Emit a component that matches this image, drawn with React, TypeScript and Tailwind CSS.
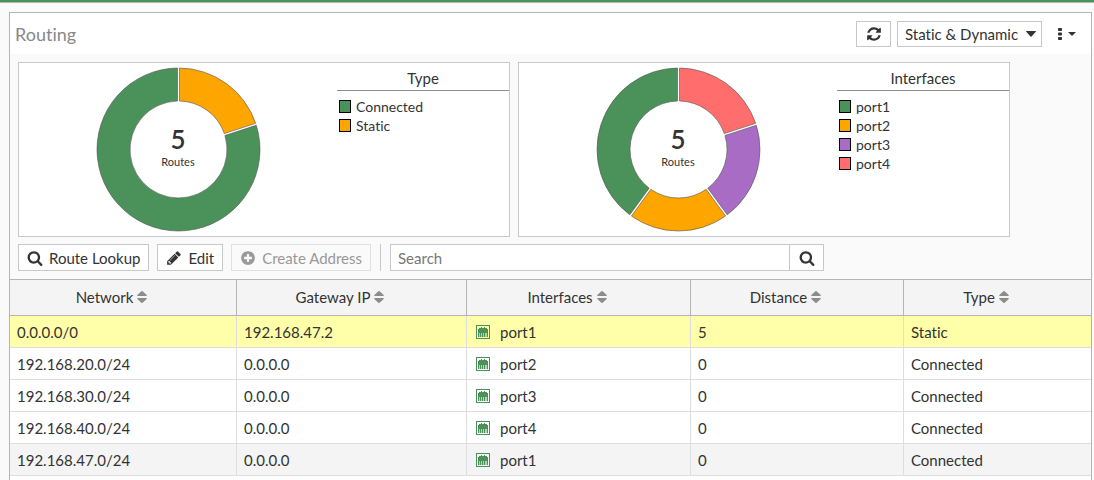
import type { ReactNode } from "react";

const GREEN = "#4a9259";
const ORANGE = "#ffa500";
const PURPLE = "#a86cc5";
const RED = "#ff6d6d";

const PATHS = {
  search:
    "M1216 832q0-185-131.5-316.5t-316.5-131.5-316.5 131.5-131.5 316.5 131.5 316.5 316.5 131.5 316.5-131.5 131.5-316.5zm512 832q0 52-38 90t-90 38q-54 0-90-38l-343-342q-179 124-399 124-143 0-273.5-55.5t-225-150-150-225-55.5-273.5 55.5-273.5 150-225 225-150 273.5-55.5 273.5 55.5 225 150 150 225 55.5 273.5q0 220-124 399l343 343q37 37 37 90z",
  refresh:
    "M1639 1056q0 5-1 7-64 268-268 434.5t-478 166.5q-146 0-282.5-55t-243.5-157l-129 129q-19 19-45 19t-45-19-19-45v-448q0-26 19-45t45-19h448q26 0 45 19t19 45-19 45l-137 137q71 66 161 102t187 36q134 0 250-65t186-179q11-17 53-117 8-23 30-23h192q13 0 22.5 9.5t9.5 22.5zm25-800v448q0 26-19 45t-45 19h-448q-26 0-45-19t-19-45 19-45l138-138q-148-137-349-137-134 0-250 65t-186 179q-11 17-53 117-8 23-30 23h-199q-13 0-22.5-9.5t-9.5-22.5v-7q65-268 270-434.5t480-166.5q146 0 284 55.5t245 156.5l130-129q19-19 45-19t45 19 19 45z",
  pencil:
    "M491 1536l91-91-235-235-91 91v107h128v128h107zm523-928q0-22-22-22-10 0-17 7l-542 542q-7 7-7 17 0 22 22 22 10 0 17-7l542-542q7-7 7-17zm-54-192l416 416-832 832h-416v-416zm683 96q0 53-37 90l-166 166-416-416 166-165q36-38 90-38 53 0 91 38l235 234q37 39 37 91z",
  plus:
    "M1344 960v-128q0-26-19-45t-45-19h-256v-256q0-26-19-45t-45-19h-128q-26 0-45 19t-19 45v256h-256q-26 0-45 19t-19 45v128q0 26 19 45t45 19h256v256q0 26 19 45t45 19h128q26 0 45-19t19-45v-256h256q26 0 45-19t19-45zm320-64q0 209-103 385.5t-279.5 279.5-385.5 103-385.5-103-279.5-279.5-103-385.5 103-385.5 279.5-279.5 385.5-103 385.5 103 279.5 279.5 103 385.5z",
};

function Icon({ name }: { name: keyof typeof PATHS }) {
  return (
    <svg viewBox="0 0 1792 1792" className="size-4 shrink-0 fill-current" aria-hidden="true">
      <path d={PATHS[name]} />
    </svg>
  );
}

function SortIcon() {
  return (
    <svg viewBox="0 0 10 14" className="h-[14px] w-[10px] shrink-0 fill-[#8c8c8c]" aria-hidden="true">
      <path d="M4.4 1.2q.6-.6 1.2 0L9.7 5q.5.9-.5 1H.8q-1-.1-.5-1zM4.4 12.8q.6.6 1.2 0L9.7 9q.5-.9-.5-1H.8q-1 .1-.5 1z" />
    </svg>
  );
}

function PortIcon() {
  return (
    <svg viewBox="0 0 14 14" className="size-[14px] shrink-0" aria-hidden="true">
      <rect x=".5" y=".5" width="13" height="13" fill="none" stroke={GREEN} />
      <path fill={GREEN} d="M2 4h1V3h2V2h1v1h2V2h1v1h2v1h1v4H2z" />
      <path fill={GREEN} d="M2 8h1v4H2zM4 8h1v4H4zM6 8h1v4H6zM8 8h1v4H8zM11 8h1v4h-1z" />
      <path fill={GREEN} opacity=".4" d="M3 8h1v4H3zM5 8h1v4H5zM7 8h1v4H7zM9 8h2v4H9z" />
    </svg>
  );
}

type Slice = { label: string; color: string; value: number };

function slicePath(from: number, to: number) {
  const outer = 81.5;
  const inner = 48.5;
  const gap = 1;
  const point = (radius: number, angle: number, side: number) => {
    const a = angle + side * Math.asin(gap / radius);
    return `${(82.5 + radius * Math.sin(a)).toFixed(2)} ${(82.5 - radius * Math.cos(a)).toFixed(2)}`;
  };
  const large = to - from > Math.PI ? 1 : 0;
  return `M${point(outer, from, 1)}A${outer} ${outer} 0 ${large} 1 ${point(outer, to, -1)}L${point(inner, to, -1)}A${inner} ${inner} 0 ${large} 0 ${point(inner, from, 1)}Z`;
}

function ChartCard({ title, slices }: { title: string; slices: Slice[] }) {
  const total = slices.reduce((sum, s) => sum + s.value, 0);
  let angle = 0;
  const arcs = [...slices].reverse().map((s) => {
    const from = angle;
    angle += (s.value / total) * 2 * Math.PI;
    return { ...s, d: slicePath(from, angle) };
  });
  return (
    <section className="flex h-[175px] w-[492px] border border-[#c8c8c8] bg-white">
      <div className="grid flex-1 place-items-center pb-px">
        <svg viewBox="0 0 164 164" className="col-start-1 row-start-1 size-[164px] overflow-visible" aria-hidden="true">
          {arcs.map((a) => (
            <path key={a.label} d={a.d} fill={a.color} stroke="#555" strokeOpacity=".6" strokeWidth="1" />
          ))}
        </svg>
        <div className="col-start-1 row-start-1 flex flex-col items-center pb-1.5">
          <span className="text-[26px] leading-[31px] font-semibold">{total}</span>
          <span className="text-[11px] leading-[13px]">Routes</span>
        </div>
      </div>
      <div className="w-[172px]">
        <h2 className="h-7 border-b border-[#8c8c8c] text-center text-[15px] leading-[30px]">{title}</h2>
        <ul className="flex flex-col pt-1.5 pl-0.5">
          {slices.map((s) => (
            <li key={s.label} className="flex h-[19px] items-center gap-[5px] text-sm">
              <span className="h-[13px] w-3 border border-black" style={{ backgroundColor: s.color }} />
              {s.label}
            </li>
          ))}
        </ul>
      </div>
    </section>
  );
}

function ToolButton({ icon, children, disabled }: { icon: keyof typeof PATHS; children: ReactNode; disabled?: boolean }) {
  return (
    <button
      type="button"
      disabled={disabled}
      className="flex h-[27px] items-center gap-1.5 border border-[#c8c8c8] bg-white px-2 whitespace-nowrap disabled:border-[#e0e0e0] disabled:bg-transparent disabled:text-[#999]"
    >
      <Icon name={icon} />
      {children}
    </button>
  );
}

const COLUMNS = [
  { name: "Network", width: "w-[227px]" },
  { name: "Gateway IP", width: "w-[230px]" },
  { name: "Interfaces", width: "w-[224px]" },
  { name: "Distance", width: "w-[213px]" },
  { name: "Type", width: "" },
];

const ROUTES = [
  { network: "0.0.0.0/0", gateway: "192.168.47.2", port: "port1", distance: 5, type: "Static", bg: "bg-[#ffffaa]" },
  { network: "192.168.20.0/24", gateway: "0.0.0.0", port: "port2", distance: 0, type: "Connected", bg: "" },
  { network: "192.168.30.0/24", gateway: "0.0.0.0", port: "port3", distance: 0, type: "Connected", bg: "" },
  { network: "192.168.40.0/24", gateway: "0.0.0.0", port: "port4", distance: 0, type: "Connected", bg: "" },
  { network: "192.168.47.0/24", gateway: "0.0.0.0", port: "port1", distance: 0, type: "Connected", bg: "bg-[#f4f4f4]" },
];

const CELL = "border-r border-b border-[#dedede] px-[7px] last:border-r-0";

export default function App() {
  return (
    <div className="flex min-h-screen flex-col border-t-2 border-[#4a9259] bg-[#fafafa] font-['Lato',sans-serif] text-[15px] leading-5 text-[#333] [font-variant-ligatures:none]">
      <div className="flex flex-1 flex-col border-t border-[#b5b5b5] pt-[9px] pr-0.5 pl-[9px]">
        <main className="flex-1 border border-b-0 border-[#b5b5b5] bg-white">
          <header className="flex h-[41px] items-center gap-1.5 bg-white pr-[15px] pl-[5px]">
            <h1 className="flex-1 text-lg text-[#888]">Routing</h1>
            <button type="button" aria-label="Refresh" className="flex h-[26px] w-[35px] items-center justify-center border border-[#c8c8c8]">
              <Icon name="refresh" />
            </button>
            <div className="grid items-center">
              <select
                aria-label="Route type"
                className="col-start-1 row-start-1 h-[26px] w-[145px] appearance-none border border-[#c8c8c8] bg-white pl-[7px]"
              >
                <option>Static &amp; Dynamic</option>
              </select>
              <svg viewBox="0 0 10 6" className="pointer-events-none col-start-1 row-start-1 mr-1.5 h-1.5 w-2.5 justify-self-end fill-current" aria-hidden="true">
                <path d="M0 .5Q0 0 .7 0h8.600Q10 0 10 .5L5.500 5.500q-.5.500-1 0z" />
              </svg>
            </div>
            <button type="button" aria-label="More options" className="ml-2.5 flex h-[26px] items-center gap-1.5">
              <svg viewBox="0 0 4 14" className="h-[14px] w-1 fill-current" aria-hidden="true">
                <path d="M.8 1h2.400q.8 0 .8.800v1.400q0 .8-.8.800H.8Q0 4 0 3.200V1.800Q0 1 .8 1zM.8 5.500h2.400q.8 0 .8.800v1.400q0 .8-.8.800H.8q-.8 0-.8-.8V6.300q0-.8.8-.8zM.8 10h2.400q.8 0 .8.800v1.400q0 .8-.8.800H.8q-.8 0-.8-.8v-1.400q0-.8.8-.8z" />
              </svg>
              <svg viewBox="0 0 8 4" className="h-1 w-2 fill-current" aria-hidden="true">
                <path d="M0 0h8L4 4z" />
              </svg>
            </button>
          </header>

          <div className="flex flex-wrap gap-2 bg-[#fafafa] px-2 pt-2">
            <ChartCard
              title="Type"
              slices={[
                { label: "Connected", color: GREEN, value: 4 },
                { label: "Static", color: ORANGE, value: 1 },
              ]}
            />
            <ChartCard
              title="Interfaces"
              slices={[
                { label: "port1", color: GREEN, value: 2 },
                { label: "port2", color: ORANGE, value: 1 },
                { label: "port3", color: PURPLE, value: 1 },
                { label: "port4", color: RED, value: 1 },
              ]}
            />
          </div>

          <div className="flex items-center gap-2 bg-[#fafafa] px-2 pt-[7px] pb-2">
            <ToolButton icon="search">Route Lookup</ToolButton>
            <ToolButton icon="pencil">Edit</ToolButton>
            <ToolButton icon="plus" disabled>
              Create Address
            </ToolButton>
            <div className="mx-px h-[27px] w-px bg-[#c8c8c8]" />
            <form role="search" className="flex h-[27px] w-[434px] border border-[#c8c8c8] bg-white" onSubmit={(e) => e.preventDefault()}>
              <input
                type="text"
                aria-label="Search routes"
                placeholder="Search"
                className="min-w-0 flex-1 px-[7px] outline-none placeholder:text-[#777]"
              />
              <button type="submit" aria-label="Search" className="flex w-[34px] items-center justify-center border-l border-[#c8c8c8]">
                <Icon name="search" />
              </button>
            </form>
          </div>

          <table className="w-full table-fixed border-separate border-spacing-0 bg-white">
            <thead className="bg-[#f4f4f4]">
              <tr className="h-[37px]">
                {COLUMNS.map((c) => (
                  <th key={c.name} className={`border-y border-r border-[#b5b5b5] p-0 font-normal last:border-r-0 ${c.width}`}>
                    <button type="button" className="flex w-full items-center justify-center gap-1 pr-[23px] pb-0.5">
                      {c.name}
                      <SortIcon />
                    </button>
                  </th>
                ))}
              </tr>
            </thead>
            <tbody>
              {ROUTES.map((r) => (
                <tr key={r.network} className={`h-8 ${r.bg}`}>
                  <td className={CELL}>{r.network}</td>
                  <td className={CELL}>{r.gateway}</td>
                  <td className={CELL}>
                    <div className="flex items-center gap-2.5 pl-0.5">
                      <PortIcon />
                      {r.port}
                    </div>
                  </td>
                  <td className={CELL}>{r.distance}</td>
                  <td className={CELL}>{r.type}</td>
                </tr>
              ))}
            </tbody>
          </table>
        </main>
      </div>
    </div>
  );
}
